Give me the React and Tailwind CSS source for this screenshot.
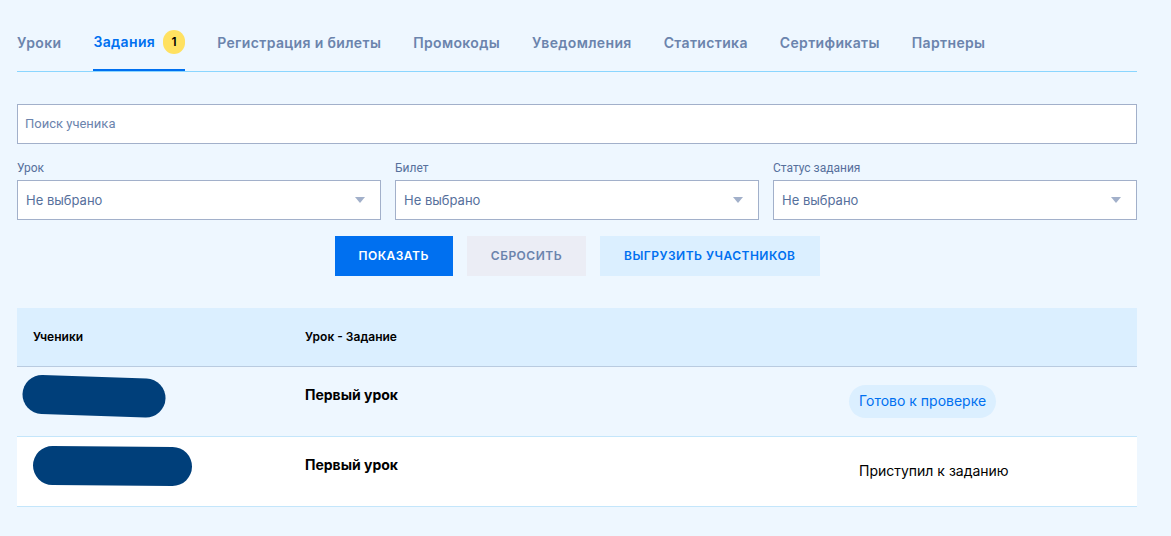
const tabs = [
  { title: 'Уроки' },
  { title: 'Задания', count: 1, active: true },
  { title: 'Регистрация и билеты' },
  { title: 'Промокоды' },
  { title: 'Уведомления' },
  { title: 'Статистика' },
  { title: 'Сертификаты' },
  { title: 'Партнеры' },
];

const filters = [
  { id: 'lesson', label: 'Урок' },
  { id: 'ticket', label: 'Билет' },
  { id: 'status', label: 'Статус задания' },
];

function Tab({ title, count, active }) {
  if (active) {
    return (
      <a
        href="#"
        aria-current="page"
        className="flex h-full items-center gap-2 border-b-2 border-[#0070f0] pb-[14px] text-[#0070f0]"
      >
        <span>{title}</span>
        <span className="flex h-6 w-[22px] items-center justify-center rounded-full bg-[#ffe161] text-xs tracking-normal text-black">
          {count}
        </span>
      </a>
    );
  }
  return (
    <a href="#" className="flex h-full items-center pb-[14px] text-[#6b84ad]">
      {title}
    </a>
  );
}

function Filter({ id, label }) {
  return (
    <div className="flex min-w-0 flex-1 flex-col">
      <label htmlFor={id} className="h-6 font-['Roboto',sans-serif] text-xs leading-6 text-[#56709c]">
        {label}
      </label>
      <div className="relative">
        <select
          id={id}
          className="block h-10 w-full appearance-none border border-[#a2b0ca] bg-white px-2 pt-[2px] text-[13px] text-[#56709c]"
        >
          <option>Не выбрано</option>
        </select>
        <svg
          viewBox="0 0 10 6"
          className="pointer-events-none absolute top-[17px] right-4 h-[6px] w-[10px] fill-[#a2b0ca]"
          aria-hidden="true"
        >
          <path d="M0 0h10L5 6z" />
        </svg>
      </div>
    </div>
  );
}

export default function App() {
  return (
    <main className="min-h-screen bg-[#eef7ff] pt-7 pr-[34px] pb-7 pl-[17px] font-['Inter',sans-serif] text-black">
      <nav className="flex h-11 gap-8 border-b border-[#8ad6ff] text-sm font-semibold tracking-wide whitespace-nowrap">
        {tabs.map((tab) => (
          <Tab key={tab.title} {...tab} />
        ))}
      </nav>

      <form className="mt-8" onSubmit={(e) => e.preventDefault()}>
        <input
          type="text"
          aria-label="Поиск ученика"
          placeholder="Поиск ученика"
          className="block h-10 w-full border border-[#a2b0ca] bg-white px-[7px] pb-[2px] font-['Roboto',sans-serif] text-[13px] placeholder:text-[#6b84ad]"
        />
        <div className="mt-3 flex gap-[14px]">
          {filters.map((filter) => (
            <Filter key={filter.id} {...filter} />
          ))}
        </div>
        <div className="mt-4 flex justify-center gap-[14px] text-xs font-semibold tracking-[0.04em]">
          <button type="submit" className="h-10 bg-[#0070f0] px-6 text-white uppercase">
            Показать
          </button>
          <button type="reset" className="h-10 bg-[#ebedf5] px-6 text-[#6b84ad] uppercase">
            Сбросить
          </button>
          <button type="button" className="h-10 bg-[#dbefff] px-6 text-[#0070f0] uppercase">
            Выгрузить участников
          </button>
        </div>
      </form>

      <table className="mt-8 w-full table-fixed border-collapse text-left">
        <colgroup>
          <col className="w-[272px]" />
          <col />
          <col className="w-[304px]" />
        </colgroup>
        <thead>
          <tr className="h-[58px] border-b border-[#b9cbe0] bg-[#dbefff] text-xs">
            <th className="px-4 font-semibold">Ученики</th>
            <th className="px-4 font-semibold">Урок - Задание</th>
            <td />
          </tr>
        </thead>
        <tbody>
          <tr className="h-[70px] border-b border-[#c4e6fb]">
            <td className="pl-[5px] align-middle">
              <svg viewBox="0 0 144 44" className="mb-[10px] block h-11 w-36" role="img" aria-label="Имя скрыто">
                <path d="M20 20.5L124 24" stroke="#003f7a" strokeWidth="39" strokeLinecap="round" />
              </svg>
            </td>
            <td className="px-4 pt-[18px] align-top text-sm leading-5 font-bold">Первый урок</td>
            <td className="px-4 align-middle text-sm">
              <span className="inline-block rounded-full bg-[#dbefff] px-[10px] pt-[5px] pb-[7px] leading-[21px] text-[#0070f0]">
                Готово к проверке
              </span>
            </td>
          </tr>
          <tr className="h-[70px] border-b border-[#c4e6fb] bg-white">
            <td className="pl-4 align-middle">
              <svg viewBox="0 0 160 42" className="mb-[10px] block h-[42px] w-40" role="img" aria-label="Имя скрыто">
                <path d="M19.5 20.5L139.5 21.5" stroke="#003f7a" strokeWidth="39" strokeLinecap="round" />
              </svg>
            </td>
            <td className="px-4 pt-[18px] align-top text-sm leading-5 font-bold">Первый урок</td>
            <td className="px-4 align-middle text-sm">
              <span className="inline-block px-[10px] pt-[5px] pb-[7px] leading-[21px]">Приступил к заданию</span>
            </td>
          </tr>
        </tbody>
      </table>
    </main>
  );
}
